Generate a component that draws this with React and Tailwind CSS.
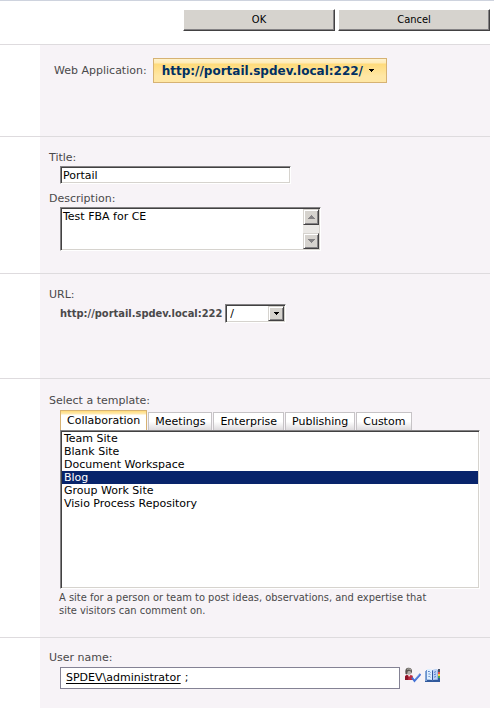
import React, { useState } from "react";

const templates = {
  Collaboration: [
    "Team Site",
    "Blank Site",
    "Document Workspace",
    "Blog",
    "Group Work Site",
    "Visio Process Repository",
  ],
  Meetings: ["Basic Meeting Workspace", "Blank Meeting Workspace"],
  Enterprise: ["Document Center", "Records Center"],
  Publishing: ["Publishing Portal", "Enterprise Wiki"],
  Custom: ["< Select template later... >"],
};

const sunken =
  "border border-t-[#848284] border-l-[#848284] border-r-white border-b-white bg-white shadow-[inset_1px_1px_#424142,inset_-1px_-1px_#d6d3ce] outline-none";
const raised =
  "border border-t-[#d6d3ce] border-l-[#d6d3ce] border-r-[#424142] border-b-[#424142] bg-[#d6d3ce] shadow-[inset_1px_1px_#ffffff,inset_-1px_-1px_#848284]";
const tahoma = "font-['DejaVu_Sans_Condensed','DejaVu_Sans',sans-serif]";

function Section({ className, children }) {
  return (
    <section className="border-t border-[#dedbde] pl-10">
      <div className={`bg-[#f7f3f7] pr-[10px] pl-[9px] ${className}`}>
        {children}
      </div>
    </section>
  );
}

function FormButton({ children }) {
  return (
    <button
      type="button"
      className={`h-[22px] w-[152px] border border-t-white border-l-white border-r-[#424142] border-b-[#424142] bg-[#d6d3ce] shadow-[inset_-1px_-1px_#848284] ${tahoma}`}
    >
      {children}
    </button>
  );
}

function Arrow({ up }) {
  return (
    <svg
      viewBox="0 0 7 4"
      className="h-1 w-[7px]"
      fill="currentColor"
      shapeRendering="crispEdges"
    >
      <path
        d={
          up
            ? "M3 0h1v1h1v1h1v1h1v1H0V3h1V2h1V1h1z"
            : "M0 0h7v1H6v1H5v1H4v1H3V3H2V2H1V1H0z"
        }
      />
    </svg>
  );
}

function SmallArrow() {
  return (
    <svg
      viewBox="0 0 5 3"
      className="h-[3px] w-[5px]"
      fill="#000"
      shapeRendering="crispEdges"
    >
      <path d="M0 0h5v1H4v1H3v1H2V2H1V1H0z" />
    </svg>
  );
}

function CheckNamesIcon() {
  return (
    <svg viewBox="0 0 17 16" className="h-4 w-[17px]">
      <path d="M1 13V9.500Q1 8 3 8h3.500Q9 8 9 10v3z" fill="#bd2c42" />
      <path d="M1 9.500 3 8l1.500 2L4 13H1z" fill="#8c1429" />
      <path d="m4 8 1 2 1.500-2z" fill="#f7e7e7" />
      <circle cx="5" cy="5" r="2.800" fill="#b5aeab" />
      <path
        d="M1.500 7Q.5 1 4 .8 8 .5 8 4.500V6L6.800 5l-.5-1.300L3.800 4.200 3 7.500z"
        fill="#5a5552"
      />
      <path
        d="M3 2.500Q5 1 7 3"
        stroke="#a5a29c"
        strokeWidth="1.200"
        fill="none"
      />
      <path
        d="m8 10.500 2.500 3.500L16.500 7"
        stroke="#4271d6"
        strokeWidth="2"
        fill="none"
      />
      <path d="m11 12.500 4.500-5.200" stroke="#8caaef" strokeWidth=".7" />
    </svg>
  );
}

function AddressBookIcon() {
  return (
    <svg viewBox="0 0 15 13" className="h-[13px] w-[15px]">
      <path d="M0 2h15v11H0z" fill="#31599c" />
      <path d="M0 2h2v10H0z" fill="#84a6d6" />
      <path d="M1 1h12v10H1z" fill="#6b92ce" />
      <path d="M2 0h3q2 0 2.500 1.500V11.500Q6.500 10 2 10.500z" fill="#deefff" />
      <path d="M12.500 0h-2q-2.500 0-3 1.500v10Q8.500 10 12.500 10.500z" fill="#bdd3f7" />
      <path d="M7.500 1.500v10" stroke="#31559c" />
      <path
        d="M3 2.500h1.500l1 1M3.500 5h1l1 .7M3.500 7.500h1l1 .7M9 3.500l2-1M9 5.700 11 5M9 8.200l2-.7"
        stroke="#5a82c6"
        fill="none"
      />
      <path d="M13 0h2v3h-2z" fill="#4a5163" />
      <path d="M13 3h2v2h-2z" fill="#e7514a" />
      <path d="M13 5h2v2h-2z" fill="#ffd342" />
      <path d="M13 7h2v2h-2z" fill="#42a65a" />
    </svg>
  );
}

export default function App() {
  const [tab, setTab] = useState("Collaboration");
  const [template, setTemplate] = useState("Blog");

  return (
    <div className="min-h-screen border-t border-[#ced3de] bg-white pr-1 font-['DejaVu_Sans',sans-serif] text-[11px] leading-4 text-[#4a494a]">
      <div className="flex justify-end gap-[3px] pt-2 pb-[13px] text-black">
        <FormButton>OK</FormButton>
        <FormButton>Cancel</FormButton>
      </div>

      <Section className="pt-[13px] pb-[53px]">
        <div className="flex items-center gap-[6px] pl-[5px]">
          <span>Web Application:</span>
          <button
            type="button"
            className="flex h-[25px] items-center gap-[6px] border border-[#d6b273] bg-[linear-gradient(#fff3ce_0,#ffebb5_4px,#ffdb7b_5px,#ffe7a5_17px,#ffe7a5)] pr-3 pl-2 text-xs font-bold text-[#003063]"
          >
            http://portail.spdev.local:222/
            <SmallArrow />
          </button>
        </div>
      </Section>

      <Section className="pt-[13px] pb-[22px]">
        <label htmlFor="title" className="block">
          Title:
        </label>
        <input
          id="title"
          type="text"
          defaultValue="Portail"
          className={`ml-[11px] block h-[18px] w-full max-w-[231px] px-[2px] text-black ${sunken}`}
        />
        <label htmlFor="description" className="mt-[7px] block">
          Description:
        </label>
        <div className={`ml-[11px] flex h-11 max-w-[261px] p-px ${sunken}`}>
          <textarea
            id="description"
            defaultValue="Test FBA for CE"
            className="min-w-0 flex-1 resize-none overflow-hidden px-px text-black outline-none"
          />
          <div className="flex w-4 flex-col justify-between bg-[#ebe9e6] text-[#848284]">
            <button
              type="button"
              aria-label="Scroll up"
              className={`flex h-4 items-center justify-center ${raised}`}
            >
              <Arrow up />
            </button>
            <button
              type="button"
              aria-label="Scroll down"
              className={`flex h-4 items-center justify-center ${raised}`}
            >
              <Arrow />
            </button>
          </div>
        </div>
      </Section>

      <Section className="pt-[13px] pb-[55px]">
        <label htmlFor="path" className="block">
          URL:
        </label>
        <div className="mt-px ml-[11px] flex items-center gap-[3px]">
          <span className={`font-bold ${tahoma}`}>
            http://portail.spdev.local:222
          </span>
          <div className="relative">
            <select
              id="path"
              className={`block h-[19px] w-[61px] appearance-none px-1 text-black ${sunken}`}
            >
              <option>/</option>
              <option>/sites/</option>
            </select>
            <span
              className={`pointer-events-none absolute top-[2px] right-[2px] flex h-[15px] w-4 items-center justify-center ${raised}`}
            >
              <SmallArrow />
            </span>
          </div>
        </div>
      </Section>

      <Section className="pt-[14px] pb-5">
        <label htmlFor="template" className="block">
          Select a template:
        </label>
        <div className="mt-px ml-[11px] flex items-end gap-px text-black">
          {Object.keys(templates).map((name) => (
            <button
              key={name}
              type="button"
              onClick={() => setTab(name)}
              className={
                name === tab
                  ? "h-5 border border-b-0 border-[#d6b273] bg-[linear-gradient(#ffdb7b_0,#ffebb5_3px,#ffffff_4px)] px-[6px]"
                  : "h-[18px] border border-b-0 border-[#c6c3c6] bg-[linear-gradient(#ffffff_50%,#dedbde)] px-[6px]"
              }
            >
              {name}
            </button>
          ))}
        </div>
        <select
          id="template"
          size={12}
          value={template}
          onChange={(e) => setTemplate(e.target.value)}
          className={`ml-[11px] block h-[159px] w-[calc(100%-11px)] appearance-none overflow-hidden p-px text-black ${sunken}`}
        >
          {templates[tab].map((name) => (
            <option
              key={name}
              className="h-[13px] min-h-0 p-0 px-[2px] leading-[13px] checked:bg-[linear-gradient(#08246b,#08246b)] checked:[-webkit-text-fill-color:#fff]"
            >
              {name}
            </option>
          ))}
        </select>
        <p className={`mt-[2px] ml-[10px] max-w-[385px] leading-[13px] ${tahoma}`}>
          A site for a person or team to post ideas, observations, and expertise
          that site visitors can comment on.
        </p>
      </Section>

      <Section className="pt-3 pb-5">
        <label htmlFor="user" className="block">
          User name:
        </label>
        <div className="mt-px ml-[11px] flex items-start">
          <div className="flex h-[22px] w-full max-w-[340px] items-center gap-1 border border-[#848294] bg-white px-[5px] text-black">
            <input
              id="user"
              type="text"
              defaultValue="SPDEV\administrator"
              className="field-sizing-content underline underline-offset-2 outline-none"
            />
            <span>;</span>
          </div>
          <button type="button" aria-label="Check names" className="ml-1">
            <CheckNamesIcon />
          </button>
          <button type="button" aria-label="Browse" className="mt-[2px] ml-1">
            <AddressBookIcon />
          </button>
        </div>
      </Section>
    </div>
  );
}
